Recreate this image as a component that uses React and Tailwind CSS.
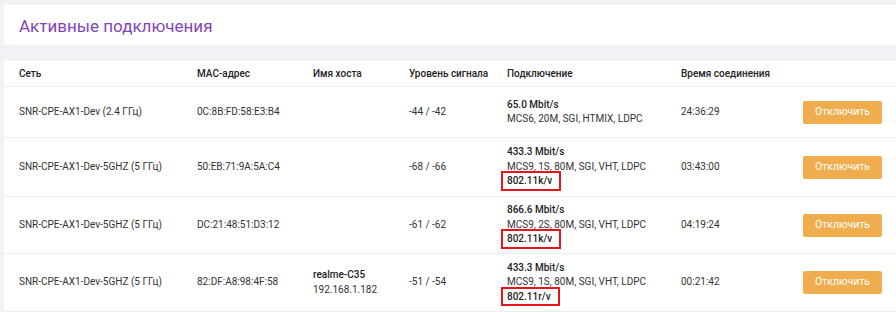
import React from 'react';

const ROWS = [
    { net: 'SNR-CPE-AX1-Dev (2.4 ГГц)', mac: '0C:8B:FD:58:E3:B4', signal: '-44 / -42', rate: '65.0 Mbit/s', mcs: 'MCS6, 20M, SGI, HTMIX, LDPC', time: '24:36:29', h: 'h-[51px]' },
    { net: 'SNR-CPE-AX1-Dev-5GHZ (5 ГГц)', mac: '50:EB:71:9A:5A:C4', signal: '-68 / -66', rate: '433.3 Mbit/s', mcs: 'MCS9, 1S, 80M, SGI, VHT, LDPC', std: '802.11k/v', time: '03:43:00', h: 'h-[59px]' },
    { net: 'SNR-CPE-AX1-Dev-5GHZ (5 ГГц)', mac: 'DC:21:48:51:D3:12', signal: '-61 / -62', rate: '866.6 Mbit/s', mcs: 'MCS9, 2S, 80M, SGI, VHT, LDPC', std: '802.11k/v', time: '04:19:24', h: 'h-[57px]' },
    { net: 'SNR-CPE-AX1-Dev-5GHZ (5 ГГц)', mac: '82:DF:A8:98:4F:58', host: 'realme-C35', ip: '192.168.1.182', signal: '-51 / -54', rate: '433.3 Mbit/s', mcs: 'MCS9, 1S, 80M, SGI, VHT, LDPC', std: '802.11r/v', time: '00:21:42', h: 'h-[58px]' },
];

const COLS = 'grid grid-cols-[178px_116px_96px_98px_174px_122px_1fr] items-center pl-[15px]';

const App = () => {
    return (
        <div className="w-[896px] h-[312px] overflow-hidden bg-[#f1f2f6] pt-[5px] pl-[4px] text-[10px] text-[#333] font-['Roboto','Liberation_Sans',sans-serif]">
            <div className="h-[40px] bg-white flex items-center pl-[15px] pt-[3px]">
                <h1 className="text-[17px] leading-none text-[#8244b8]">Активные подключения</h1>
            </div>
            <div className="mt-[16px] bg-white">
                <div className={`${COLS} h-[26px] border-b border-[#eceef2] font-medium text-[#222]`}>
                    <div>Сеть</div>
                    <div>MAC-адрес</div>
                    <div>Имя хоста</div>
                    <div>Уровень сигнала</div>
                    <div>Подключение</div>
                    <div>Время соединения</div>
                    <div></div>
                </div>
                {ROWS.map((r) => (
                    <div key={r.mac} className={`${COLS} ${r.h} border-b border-[#eceef2] leading-[14.5px]`}>
                        <div>{r.net}</div>
                        <div>{r.mac}</div>
                        <div>
                            {r.host && <div className="font-medium text-[#222]">{r.host}</div>}
                            {r.ip && <div>{r.ip}</div>}
                        </div>
                        <div>{r.signal}</div>
                        <div>
                            <div className="font-medium text-[#222]">{r.rate}</div>
                            <div>{r.mcs}</div>
                            {r.std && (
                                <div className="relative inline-block font-medium text-[#222]">
                                    {r.std}
                                    <span className="absolute left-[-6px] right-[-9px] top-[-3px] bottom-[-2px] border-2 border-[#e8141b]"></span>
                                </div>
                            )}
                        </div>
                        <div>{r.time}</div>
                        <div>
                            <button className="w-[79px] h-[23px] rounded-[2px] bg-[#f0ad4e] text-white text-[10.5px]">Отключить</button>
                        </div>
                    </div>
                ))}
            </div>
        </div>
    );
};

export default App;
